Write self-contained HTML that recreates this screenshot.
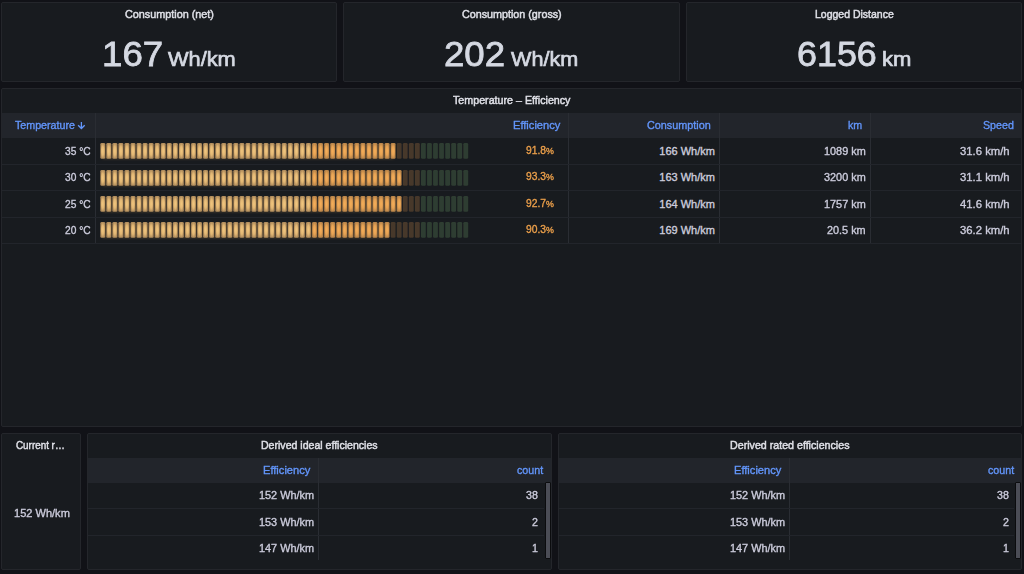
<!DOCTYPE html>
<html><head><meta charset="utf-8"><style>
html,body{margin:0;padding:0;}
body{width:1024px;height:574px;overflow:hidden;background:#111217;position:relative;font-family:"Liberation Sans", sans-serif;}
.p{position:absolute;background:#181b1f;border:1px solid #24262b;border-radius:2px;}
.r{position:absolute;}

.t{position:absolute;white-space:nowrap;line-height:1;transform-origin:0 0;}
.ttl{-webkit-text-stroke:0.45px;}
.big{-webkit-text-stroke:0.8px;}
.unit{-webkit-text-stroke:0.7px;}
.bd{-webkit-text-stroke:0.35px;}

.bar{position:absolute;}
.bar i{position:absolute;top:0;width:4.8px;height:15.8px;border-radius:1.5px;}
.cl1{background:radial-gradient(ellipse at center,#f2c77f 0%,#e9bd77 45%,#c9a066 100%);box-shadow:0 0 1.5px rgba(255,203,125,0.4);}
.cl2{background:radial-gradient(ellipse at center,#f4ad58 0%,#eaa654 45%,#c98d4e 100%);box-shadow:0 0 1.5px rgba(255,179,87,0.4);}
.cu1{background:#46372a;}
.cu2{background:#2e3d31;}
</style></head><body>
<div class="p" style="left:1px;top:2px;width:334px;height:78px;"></div>
<div class="p" style="left:343px;top:2px;width:335px;height:78px;"></div>
<div class="p" style="left:686px;top:2px;width:334px;height:78px;"></div>
<div class="p" style="left:1px;top:88px;width:1019px;height:337px;"></div>
<div class="r" style="left:2px;top:113px;width:1019px;height:25px;background:#22252b"></div>
<div class="r" style="left:95px;top:113px;width:1px;height:130px;background:#2a2d33"></div>
<div class="r" style="left:568px;top:113px;width:1px;height:130px;background:#2a2d33"></div>
<div class="r" style="left:719px;top:113px;width:1px;height:130px;background:#2a2d33"></div>
<div class="r" style="left:870px;top:113px;width:1px;height:130px;background:#2a2d33"></div>
<div class="r" style="left:2px;top:164px;width:1019px;height:1px;background:#22252b"></div>
<div class="r" style="left:2px;top:190px;width:1019px;height:1px;background:#22252b"></div>
<div class="r" style="left:2px;top:217px;width:1019px;height:1px;background:#22252b"></div>
<div class="r" style="left:2px;top:243px;width:1019px;height:1px;background:#22252b"></div>
<div class="p" style="left:1px;top:433px;width:78px;height:135px;"></div>
<div class="p" style="left:87px;top:433px;width:463px;height:135px;"></div>
<div class="r" style="left:88px;top:458px;width:463px;height:25px;background:#22252b"></div>
<div class="r" style="left:318px;top:458px;width:1px;height:102px;background:#2a2d33"></div>
<div class="r" style="left:88px;top:508px;width:456px;height:1px;background:#22252b"></div>
<div class="r" style="left:88px;top:535px;width:456px;height:1px;background:#22252b"></div>
<div class="r" style="left:545px;top:482px;width:6px;height:77px;background:#4b4d56;border:1px solid #0b0c0e;box-sizing:border-box;border-radius:1px"></div>
<div class="p" style="left:558px;top:433px;width:462px;height:135px;"></div>
<div class="r" style="left:559px;top:458px;width:462px;height:25px;background:#22252b"></div>
<div class="r" style="left:789px;top:458px;width:1px;height:102px;background:#2a2d33"></div>
<div class="r" style="left:559px;top:508px;width:455px;height:1px;background:#22252b"></div>
<div class="r" style="left:559px;top:535px;width:455px;height:1px;background:#22252b"></div>
<div class="r" style="left:1015px;top:482px;width:6px;height:77px;background:#4b4d56;border:1px solid #0b0c0e;box-sizing:border-box;border-radius:1px"></div>
<svg width="0" height="0" style="position:absolute"><defs>
<radialGradient id="g1" cx="50%" cy="50%" r="50%"><stop offset="0" stop-color="#f2c77f"/><stop offset="0.55" stop-color="#e2b774"/><stop offset="1" stop-color="#b08c5c"/></radialGradient>
<radialGradient id="g2" cx="50%" cy="50%" r="50%"><stop offset="0" stop-color="#f6af5a"/><stop offset="0.55" stop-color="#e6a253"/><stop offset="1" stop-color="#b8844a"/></radialGradient>
<filter id="bl" x="-5%" y="-20%" width="110%" height="140%"><feGaussianBlur stdDeviation="0.5"/></filter><filter id="gl" x="-5%" y="-30%" width="110%" height="160%"><feGaussianBlur stdDeviation="1"/></filter>
</defs></svg>
<svg class="bar" width="372" height="20" style="left:98px;top:141.40px"><rect x="4.5" y="3.5" width="291.45" height="14.8" fill="#f5b260" opacity="0.18" filter="url(#gl)"/><g filter="url(#bl)"><rect x="2.35" y="2" width="4.8" height="15.8" rx="1.3" fill="url(#g1)"/><rect x="8.40" y="2" width="4.8" height="15.8" rx="1.3" fill="url(#g1)"/><rect x="14.45" y="2" width="4.8" height="15.8" rx="1.3" fill="url(#g1)"/><rect x="20.50" y="2" width="4.8" height="15.8" rx="1.3" fill="url(#g1)"/><rect x="26.55" y="2" width="4.8" height="15.8" rx="1.3" fill="url(#g1)"/><rect x="32.60" y="2" width="4.8" height="15.8" rx="1.3" fill="url(#g1)"/><rect x="38.65" y="2" width="4.8" height="15.8" rx="1.3" fill="url(#g1)"/><rect x="44.70" y="2" width="4.8" height="15.8" rx="1.3" fill="url(#g1)"/><rect x="50.75" y="2" width="4.8" height="15.8" rx="1.3" fill="url(#g1)"/><rect x="56.80" y="2" width="4.8" height="15.8" rx="1.3" fill="url(#g1)"/><rect x="62.85" y="2" width="4.8" height="15.8" rx="1.3" fill="url(#g1)"/><rect x="68.90" y="2" width="4.8" height="15.8" rx="1.3" fill="url(#g1)"/><rect x="74.95" y="2" width="4.8" height="15.8" rx="1.3" fill="url(#g1)"/><rect x="81.00" y="2" width="4.8" height="15.8" rx="1.3" fill="url(#g1)"/><rect x="87.05" y="2" width="4.8" height="15.8" rx="1.3" fill="url(#g1)"/><rect x="93.10" y="2" width="4.8" height="15.8" rx="1.3" fill="url(#g1)"/><rect x="99.15" y="2" width="4.8" height="15.8" rx="1.3" fill="url(#g1)"/><rect x="105.20" y="2" width="4.8" height="15.8" rx="1.3" fill="url(#g1)"/><rect x="111.25" y="2" width="4.8" height="15.8" rx="1.3" fill="url(#g1)"/><rect x="117.30" y="2" width="4.8" height="15.8" rx="1.3" fill="url(#g1)"/><rect x="123.35" y="2" width="4.8" height="15.8" rx="1.3" fill="url(#g1)"/><rect x="129.40" y="2" width="4.8" height="15.8" rx="1.3" fill="url(#g1)"/><rect x="135.45" y="2" width="4.8" height="15.8" rx="1.3" fill="url(#g1)"/><rect x="141.50" y="2" width="4.8" height="15.8" rx="1.3" fill="url(#g1)"/><rect x="147.55" y="2" width="4.8" height="15.8" rx="1.3" fill="url(#g1)"/><rect x="153.60" y="2" width="4.8" height="15.8" rx="1.3" fill="url(#g1)"/><rect x="159.65" y="2" width="4.8" height="15.8" rx="1.3" fill="url(#g1)"/><rect x="165.70" y="2" width="4.8" height="15.8" rx="1.3" fill="url(#g1)"/><rect x="171.75" y="2" width="4.8" height="15.8" rx="1.3" fill="url(#g1)"/><rect x="177.80" y="2" width="4.8" height="15.8" rx="1.3" fill="url(#g1)"/><rect x="183.85" y="2" width="4.8" height="15.8" rx="1.3" fill="url(#g1)"/><rect x="189.90" y="2" width="4.8" height="15.8" rx="1.3" fill="url(#g1)"/><rect x="195.95" y="2" width="4.8" height="15.8" rx="1.3" fill="url(#g1)"/><rect x="202.00" y="2" width="4.8" height="15.8" rx="1.3" fill="url(#g1)"/><rect x="208.05" y="2" width="4.8" height="15.8" rx="1.3" fill="url(#g1)"/><rect x="214.10" y="2" width="4.8" height="15.8" rx="1.3" fill="url(#g2)"/><rect x="220.15" y="2" width="4.8" height="15.8" rx="1.3" fill="url(#g2)"/><rect x="226.20" y="2" width="4.8" height="15.8" rx="1.3" fill="url(#g2)"/><rect x="232.25" y="2" width="4.8" height="15.8" rx="1.3" fill="url(#g2)"/><rect x="238.30" y="2" width="4.8" height="15.8" rx="1.3" fill="url(#g2)"/><rect x="244.35" y="2" width="4.8" height="15.8" rx="1.3" fill="url(#g2)"/><rect x="250.40" y="2" width="4.8" height="15.8" rx="1.3" fill="url(#g2)"/><rect x="256.45" y="2" width="4.8" height="15.8" rx="1.3" fill="url(#g2)"/><rect x="262.50" y="2" width="4.8" height="15.8" rx="1.3" fill="url(#g2)"/><rect x="268.55" y="2" width="4.8" height="15.8" rx="1.3" fill="url(#g2)"/><rect x="274.60" y="2" width="4.8" height="15.8" rx="1.3" fill="url(#g2)"/><rect x="280.65" y="2" width="4.8" height="15.8" rx="1.3" fill="url(#g2)"/><rect x="286.70" y="2" width="4.8" height="15.8" rx="1.3" fill="url(#g2)"/><rect x="292.75" y="2" width="4.8" height="15.8" rx="1.3" fill="url(#g2)"/><rect x="298.80" y="2" width="4.8" height="15.8" rx="1.3" fill="#46372a"/><rect x="304.85" y="2" width="4.8" height="15.8" rx="1.3" fill="#46372a"/><rect x="310.90" y="2" width="4.8" height="15.8" rx="1.3" fill="#46372a"/><rect x="316.95" y="2" width="4.8" height="15.8" rx="1.3" fill="#46372a"/><rect x="323.00" y="2" width="4.8" height="15.8" rx="1.3" fill="#2e3d31"/><rect x="329.05" y="2" width="4.8" height="15.8" rx="1.3" fill="#2e3d31"/><rect x="335.10" y="2" width="4.8" height="15.8" rx="1.3" fill="#2e3d31"/><rect x="341.15" y="2" width="4.8" height="15.8" rx="1.3" fill="#2e3d31"/><rect x="347.20" y="2" width="4.8" height="15.8" rx="1.3" fill="#2e3d31"/><rect x="353.25" y="2" width="4.8" height="15.8" rx="1.3" fill="#2e3d31"/><rect x="359.30" y="2" width="4.8" height="15.8" rx="1.3" fill="#2e3d31"/><rect x="365.35" y="2" width="4.8" height="15.8" rx="1.3" fill="#2e3d31"/></g></svg>
<svg class="bar" width="372" height="20" style="left:98px;top:167.60px"><rect x="4.5" y="3.5" width="297.50" height="14.8" fill="#f5b260" opacity="0.18" filter="url(#gl)"/><g filter="url(#bl)"><rect x="2.35" y="2" width="4.8" height="15.8" rx="1.3" fill="url(#g1)"/><rect x="8.40" y="2" width="4.8" height="15.8" rx="1.3" fill="url(#g1)"/><rect x="14.45" y="2" width="4.8" height="15.8" rx="1.3" fill="url(#g1)"/><rect x="20.50" y="2" width="4.8" height="15.8" rx="1.3" fill="url(#g1)"/><rect x="26.55" y="2" width="4.8" height="15.8" rx="1.3" fill="url(#g1)"/><rect x="32.60" y="2" width="4.8" height="15.8" rx="1.3" fill="url(#g1)"/><rect x="38.65" y="2" width="4.8" height="15.8" rx="1.3" fill="url(#g1)"/><rect x="44.70" y="2" width="4.8" height="15.8" rx="1.3" fill="url(#g1)"/><rect x="50.75" y="2" width="4.8" height="15.8" rx="1.3" fill="url(#g1)"/><rect x="56.80" y="2" width="4.8" height="15.8" rx="1.3" fill="url(#g1)"/><rect x="62.85" y="2" width="4.8" height="15.8" rx="1.3" fill="url(#g1)"/><rect x="68.90" y="2" width="4.8" height="15.8" rx="1.3" fill="url(#g1)"/><rect x="74.95" y="2" width="4.8" height="15.8" rx="1.3" fill="url(#g1)"/><rect x="81.00" y="2" width="4.8" height="15.8" rx="1.3" fill="url(#g1)"/><rect x="87.05" y="2" width="4.8" height="15.8" rx="1.3" fill="url(#g1)"/><rect x="93.10" y="2" width="4.8" height="15.8" rx="1.3" fill="url(#g1)"/><rect x="99.15" y="2" width="4.8" height="15.8" rx="1.3" fill="url(#g1)"/><rect x="105.20" y="2" width="4.8" height="15.8" rx="1.3" fill="url(#g1)"/><rect x="111.25" y="2" width="4.8" height="15.8" rx="1.3" fill="url(#g1)"/><rect x="117.30" y="2" width="4.8" height="15.8" rx="1.3" fill="url(#g1)"/><rect x="123.35" y="2" width="4.8" height="15.8" rx="1.3" fill="url(#g1)"/><rect x="129.40" y="2" width="4.8" height="15.8" rx="1.3" fill="url(#g1)"/><rect x="135.45" y="2" width="4.8" height="15.8" rx="1.3" fill="url(#g1)"/><rect x="141.50" y="2" width="4.8" height="15.8" rx="1.3" fill="url(#g1)"/><rect x="147.55" y="2" width="4.8" height="15.8" rx="1.3" fill="url(#g1)"/><rect x="153.60" y="2" width="4.8" height="15.8" rx="1.3" fill="url(#g1)"/><rect x="159.65" y="2" width="4.8" height="15.8" rx="1.3" fill="url(#g1)"/><rect x="165.70" y="2" width="4.8" height="15.8" rx="1.3" fill="url(#g1)"/><rect x="171.75" y="2" width="4.8" height="15.8" rx="1.3" fill="url(#g1)"/><rect x="177.80" y="2" width="4.8" height="15.8" rx="1.3" fill="url(#g1)"/><rect x="183.85" y="2" width="4.8" height="15.8" rx="1.3" fill="url(#g1)"/><rect x="189.90" y="2" width="4.8" height="15.8" rx="1.3" fill="url(#g1)"/><rect x="195.95" y="2" width="4.8" height="15.8" rx="1.3" fill="url(#g1)"/><rect x="202.00" y="2" width="4.8" height="15.8" rx="1.3" fill="url(#g1)"/><rect x="208.05" y="2" width="4.8" height="15.8" rx="1.3" fill="url(#g1)"/><rect x="214.10" y="2" width="4.8" height="15.8" rx="1.3" fill="url(#g2)"/><rect x="220.15" y="2" width="4.8" height="15.8" rx="1.3" fill="url(#g2)"/><rect x="226.20" y="2" width="4.8" height="15.8" rx="1.3" fill="url(#g2)"/><rect x="232.25" y="2" width="4.8" height="15.8" rx="1.3" fill="url(#g2)"/><rect x="238.30" y="2" width="4.8" height="15.8" rx="1.3" fill="url(#g2)"/><rect x="244.35" y="2" width="4.8" height="15.8" rx="1.3" fill="url(#g2)"/><rect x="250.40" y="2" width="4.8" height="15.8" rx="1.3" fill="url(#g2)"/><rect x="256.45" y="2" width="4.8" height="15.8" rx="1.3" fill="url(#g2)"/><rect x="262.50" y="2" width="4.8" height="15.8" rx="1.3" fill="url(#g2)"/><rect x="268.55" y="2" width="4.8" height="15.8" rx="1.3" fill="url(#g2)"/><rect x="274.60" y="2" width="4.8" height="15.8" rx="1.3" fill="url(#g2)"/><rect x="280.65" y="2" width="4.8" height="15.8" rx="1.3" fill="url(#g2)"/><rect x="286.70" y="2" width="4.8" height="15.8" rx="1.3" fill="url(#g2)"/><rect x="292.75" y="2" width="4.8" height="15.8" rx="1.3" fill="url(#g2)"/><rect x="298.80" y="2" width="4.8" height="15.8" rx="1.3" fill="url(#g2)"/><rect x="304.85" y="2" width="4.8" height="15.8" rx="1.3" fill="#46372a"/><rect x="310.90" y="2" width="4.8" height="15.8" rx="1.3" fill="#46372a"/><rect x="316.95" y="2" width="4.8" height="15.8" rx="1.3" fill="#46372a"/><rect x="323.00" y="2" width="4.8" height="15.8" rx="1.3" fill="#2e3d31"/><rect x="329.05" y="2" width="4.8" height="15.8" rx="1.3" fill="#2e3d31"/><rect x="335.10" y="2" width="4.8" height="15.8" rx="1.3" fill="#2e3d31"/><rect x="341.15" y="2" width="4.8" height="15.8" rx="1.3" fill="#2e3d31"/><rect x="347.20" y="2" width="4.8" height="15.8" rx="1.3" fill="#2e3d31"/><rect x="353.25" y="2" width="4.8" height="15.8" rx="1.3" fill="#2e3d31"/><rect x="359.30" y="2" width="4.8" height="15.8" rx="1.3" fill="#2e3d31"/><rect x="365.35" y="2" width="4.8" height="15.8" rx="1.3" fill="#2e3d31"/></g></svg>
<svg class="bar" width="372" height="20" style="left:98px;top:193.80px"><rect x="4.5" y="3.5" width="297.50" height="14.8" fill="#f5b260" opacity="0.18" filter="url(#gl)"/><g filter="url(#bl)"><rect x="2.35" y="2" width="4.8" height="15.8" rx="1.3" fill="url(#g1)"/><rect x="8.40" y="2" width="4.8" height="15.8" rx="1.3" fill="url(#g1)"/><rect x="14.45" y="2" width="4.8" height="15.8" rx="1.3" fill="url(#g1)"/><rect x="20.50" y="2" width="4.8" height="15.8" rx="1.3" fill="url(#g1)"/><rect x="26.55" y="2" width="4.8" height="15.8" rx="1.3" fill="url(#g1)"/><rect x="32.60" y="2" width="4.8" height="15.8" rx="1.3" fill="url(#g1)"/><rect x="38.65" y="2" width="4.8" height="15.8" rx="1.3" fill="url(#g1)"/><rect x="44.70" y="2" width="4.8" height="15.8" rx="1.3" fill="url(#g1)"/><rect x="50.75" y="2" width="4.8" height="15.8" rx="1.3" fill="url(#g1)"/><rect x="56.80" y="2" width="4.8" height="15.8" rx="1.3" fill="url(#g1)"/><rect x="62.85" y="2" width="4.8" height="15.8" rx="1.3" fill="url(#g1)"/><rect x="68.90" y="2" width="4.8" height="15.8" rx="1.3" fill="url(#g1)"/><rect x="74.95" y="2" width="4.8" height="15.8" rx="1.3" fill="url(#g1)"/><rect x="81.00" y="2" width="4.8" height="15.8" rx="1.3" fill="url(#g1)"/><rect x="87.05" y="2" width="4.8" height="15.8" rx="1.3" fill="url(#g1)"/><rect x="93.10" y="2" width="4.8" height="15.8" rx="1.3" fill="url(#g1)"/><rect x="99.15" y="2" width="4.8" height="15.8" rx="1.3" fill="url(#g1)"/><rect x="105.20" y="2" width="4.8" height="15.8" rx="1.3" fill="url(#g1)"/><rect x="111.25" y="2" width="4.8" height="15.8" rx="1.3" fill="url(#g1)"/><rect x="117.30" y="2" width="4.8" height="15.8" rx="1.3" fill="url(#g1)"/><rect x="123.35" y="2" width="4.8" height="15.8" rx="1.3" fill="url(#g1)"/><rect x="129.40" y="2" width="4.8" height="15.8" rx="1.3" fill="url(#g1)"/><rect x="135.45" y="2" width="4.8" height="15.8" rx="1.3" fill="url(#g1)"/><rect x="141.50" y="2" width="4.8" height="15.8" rx="1.3" fill="url(#g1)"/><rect x="147.55" y="2" width="4.8" height="15.8" rx="1.3" fill="url(#g1)"/><rect x="153.60" y="2" width="4.8" height="15.8" rx="1.3" fill="url(#g1)"/><rect x="159.65" y="2" width="4.8" height="15.8" rx="1.3" fill="url(#g1)"/><rect x="165.70" y="2" width="4.8" height="15.8" rx="1.3" fill="url(#g1)"/><rect x="171.75" y="2" width="4.8" height="15.8" rx="1.3" fill="url(#g1)"/><rect x="177.80" y="2" width="4.8" height="15.8" rx="1.3" fill="url(#g1)"/><rect x="183.85" y="2" width="4.8" height="15.8" rx="1.3" fill="url(#g1)"/><rect x="189.90" y="2" width="4.8" height="15.8" rx="1.3" fill="url(#g1)"/><rect x="195.95" y="2" width="4.8" height="15.8" rx="1.3" fill="url(#g1)"/><rect x="202.00" y="2" width="4.8" height="15.8" rx="1.3" fill="url(#g1)"/><rect x="208.05" y="2" width="4.8" height="15.8" rx="1.3" fill="url(#g1)"/><rect x="214.10" y="2" width="4.8" height="15.8" rx="1.3" fill="url(#g2)"/><rect x="220.15" y="2" width="4.8" height="15.8" rx="1.3" fill="url(#g2)"/><rect x="226.20" y="2" width="4.8" height="15.8" rx="1.3" fill="url(#g2)"/><rect x="232.25" y="2" width="4.8" height="15.8" rx="1.3" fill="url(#g2)"/><rect x="238.30" y="2" width="4.8" height="15.8" rx="1.3" fill="url(#g2)"/><rect x="244.35" y="2" width="4.8" height="15.8" rx="1.3" fill="url(#g2)"/><rect x="250.40" y="2" width="4.8" height="15.8" rx="1.3" fill="url(#g2)"/><rect x="256.45" y="2" width="4.8" height="15.8" rx="1.3" fill="url(#g2)"/><rect x="262.50" y="2" width="4.8" height="15.8" rx="1.3" fill="url(#g2)"/><rect x="268.55" y="2" width="4.8" height="15.8" rx="1.3" fill="url(#g2)"/><rect x="274.60" y="2" width="4.8" height="15.8" rx="1.3" fill="url(#g2)"/><rect x="280.65" y="2" width="4.8" height="15.8" rx="1.3" fill="url(#g2)"/><rect x="286.70" y="2" width="4.8" height="15.8" rx="1.3" fill="url(#g2)"/><rect x="292.75" y="2" width="4.8" height="15.8" rx="1.3" fill="url(#g2)"/><rect x="298.80" y="2" width="4.8" height="15.8" rx="1.3" fill="url(#g2)"/><rect x="304.85" y="2" width="4.8" height="15.8" rx="1.3" fill="#46372a"/><rect x="310.90" y="2" width="4.8" height="15.8" rx="1.3" fill="#46372a"/><rect x="316.95" y="2" width="4.8" height="15.8" rx="1.3" fill="#46372a"/><rect x="323.00" y="2" width="4.8" height="15.8" rx="1.3" fill="#2e3d31"/><rect x="329.05" y="2" width="4.8" height="15.8" rx="1.3" fill="#2e3d31"/><rect x="335.10" y="2" width="4.8" height="15.8" rx="1.3" fill="#2e3d31"/><rect x="341.15" y="2" width="4.8" height="15.8" rx="1.3" fill="#2e3d31"/><rect x="347.20" y="2" width="4.8" height="15.8" rx="1.3" fill="#2e3d31"/><rect x="353.25" y="2" width="4.8" height="15.8" rx="1.3" fill="#2e3d31"/><rect x="359.30" y="2" width="4.8" height="15.8" rx="1.3" fill="#2e3d31"/><rect x="365.35" y="2" width="4.8" height="15.8" rx="1.3" fill="#2e3d31"/></g></svg>
<svg class="bar" width="372" height="20" style="left:98px;top:220.00px"><rect x="4.5" y="3.5" width="285.40" height="14.8" fill="#f5b260" opacity="0.18" filter="url(#gl)"/><g filter="url(#bl)"><rect x="2.35" y="2" width="4.8" height="15.8" rx="1.3" fill="url(#g1)"/><rect x="8.40" y="2" width="4.8" height="15.8" rx="1.3" fill="url(#g1)"/><rect x="14.45" y="2" width="4.8" height="15.8" rx="1.3" fill="url(#g1)"/><rect x="20.50" y="2" width="4.8" height="15.8" rx="1.3" fill="url(#g1)"/><rect x="26.55" y="2" width="4.8" height="15.8" rx="1.3" fill="url(#g1)"/><rect x="32.60" y="2" width="4.8" height="15.8" rx="1.3" fill="url(#g1)"/><rect x="38.65" y="2" width="4.8" height="15.8" rx="1.3" fill="url(#g1)"/><rect x="44.70" y="2" width="4.8" height="15.8" rx="1.3" fill="url(#g1)"/><rect x="50.75" y="2" width="4.8" height="15.8" rx="1.3" fill="url(#g1)"/><rect x="56.80" y="2" width="4.8" height="15.8" rx="1.3" fill="url(#g1)"/><rect x="62.85" y="2" width="4.8" height="15.8" rx="1.3" fill="url(#g1)"/><rect x="68.90" y="2" width="4.8" height="15.8" rx="1.3" fill="url(#g1)"/><rect x="74.95" y="2" width="4.8" height="15.8" rx="1.3" fill="url(#g1)"/><rect x="81.00" y="2" width="4.8" height="15.8" rx="1.3" fill="url(#g1)"/><rect x="87.05" y="2" width="4.8" height="15.8" rx="1.3" fill="url(#g1)"/><rect x="93.10" y="2" width="4.8" height="15.8" rx="1.3" fill="url(#g1)"/><rect x="99.15" y="2" width="4.8" height="15.8" rx="1.3" fill="url(#g1)"/><rect x="105.20" y="2" width="4.8" height="15.8" rx="1.3" fill="url(#g1)"/><rect x="111.25" y="2" width="4.8" height="15.8" rx="1.3" fill="url(#g1)"/><rect x="117.30" y="2" width="4.8" height="15.8" rx="1.3" fill="url(#g1)"/><rect x="123.35" y="2" width="4.8" height="15.8" rx="1.3" fill="url(#g1)"/><rect x="129.40" y="2" width="4.8" height="15.8" rx="1.3" fill="url(#g1)"/><rect x="135.45" y="2" width="4.8" height="15.8" rx="1.3" fill="url(#g1)"/><rect x="141.50" y="2" width="4.8" height="15.8" rx="1.3" fill="url(#g1)"/><rect x="147.55" y="2" width="4.8" height="15.8" rx="1.3" fill="url(#g1)"/><rect x="153.60" y="2" width="4.8" height="15.8" rx="1.3" fill="url(#g1)"/><rect x="159.65" y="2" width="4.8" height="15.8" rx="1.3" fill="url(#g1)"/><rect x="165.70" y="2" width="4.8" height="15.8" rx="1.3" fill="url(#g1)"/><rect x="171.75" y="2" width="4.8" height="15.8" rx="1.3" fill="url(#g1)"/><rect x="177.80" y="2" width="4.8" height="15.8" rx="1.3" fill="url(#g1)"/><rect x="183.85" y="2" width="4.8" height="15.8" rx="1.3" fill="url(#g1)"/><rect x="189.90" y="2" width="4.8" height="15.8" rx="1.3" fill="url(#g1)"/><rect x="195.95" y="2" width="4.8" height="15.8" rx="1.3" fill="url(#g1)"/><rect x="202.00" y="2" width="4.8" height="15.8" rx="1.3" fill="url(#g1)"/><rect x="208.05" y="2" width="4.8" height="15.8" rx="1.3" fill="url(#g1)"/><rect x="214.10" y="2" width="4.8" height="15.8" rx="1.3" fill="url(#g2)"/><rect x="220.15" y="2" width="4.8" height="15.8" rx="1.3" fill="url(#g2)"/><rect x="226.20" y="2" width="4.8" height="15.8" rx="1.3" fill="url(#g2)"/><rect x="232.25" y="2" width="4.8" height="15.8" rx="1.3" fill="url(#g2)"/><rect x="238.30" y="2" width="4.8" height="15.8" rx="1.3" fill="url(#g2)"/><rect x="244.35" y="2" width="4.8" height="15.8" rx="1.3" fill="url(#g2)"/><rect x="250.40" y="2" width="4.8" height="15.8" rx="1.3" fill="url(#g2)"/><rect x="256.45" y="2" width="4.8" height="15.8" rx="1.3" fill="url(#g2)"/><rect x="262.50" y="2" width="4.8" height="15.8" rx="1.3" fill="url(#g2)"/><rect x="268.55" y="2" width="4.8" height="15.8" rx="1.3" fill="url(#g2)"/><rect x="274.60" y="2" width="4.8" height="15.8" rx="1.3" fill="url(#g2)"/><rect x="280.65" y="2" width="4.8" height="15.8" rx="1.3" fill="url(#g2)"/><rect x="286.70" y="2" width="4.8" height="15.8" rx="1.3" fill="url(#g2)"/><rect x="292.75" y="2" width="4.8" height="15.8" rx="1.3" fill="#46372a"/><rect x="298.80" y="2" width="4.8" height="15.8" rx="1.3" fill="#46372a"/><rect x="304.85" y="2" width="4.8" height="15.8" rx="1.3" fill="#46372a"/><rect x="310.90" y="2" width="4.8" height="15.8" rx="1.3" fill="#46372a"/><rect x="316.95" y="2" width="4.8" height="15.8" rx="1.3" fill="#46372a"/><rect x="323.00" y="2" width="4.8" height="15.8" rx="1.3" fill="#2e3d31"/><rect x="329.05" y="2" width="4.8" height="15.8" rx="1.3" fill="#2e3d31"/><rect x="335.10" y="2" width="4.8" height="15.8" rx="1.3" fill="#2e3d31"/><rect x="341.15" y="2" width="4.8" height="15.8" rx="1.3" fill="#2e3d31"/><rect x="347.20" y="2" width="4.8" height="15.8" rx="1.3" fill="#2e3d31"/><rect x="353.25" y="2" width="4.8" height="15.8" rx="1.3" fill="#2e3d31"/><rect x="359.30" y="2" width="4.8" height="15.8" rx="1.3" fill="#2e3d31"/><rect x="365.35" y="2" width="4.8" height="15.8" rx="1.3" fill="#2e3d31"/></g></svg>
<div class="t ttl" style="left:125.20px;top:9px;font-size:11px;color:#e0e1e8;-webkit-text-stroke-color:#e0e1e8;transform:scaleX(0.9833);">Consumption (net)</div>
<div class="t ttl" style="left:462.00px;top:9px;font-size:11px;color:#e0e1e8;-webkit-text-stroke-color:#e0e1e8;transform:scaleX(0.9765);">Consumption (gross)</div>
<div class="t ttl" style="left:814.60px;top:9px;font-size:11px;color:#e0e1e8;-webkit-text-stroke-color:#e0e1e8;transform:scaleX(0.9542);">Logged Distance</div>
<div class="t big" style="left:101.74px;top:37px;font-size:35.5px;color:#d5d9e2;-webkit-text-stroke-color:#d5d9e2;transform:scaleX(1.0321);">167</div>
<div class="t big" style="left:444.27px;top:37px;font-size:35.5px;color:#d5d9e2;-webkit-text-stroke-color:#d5d9e2;transform:scaleX(1.0298);">202</div>
<div class="t big" style="left:796.89px;top:37px;font-size:35.5px;color:#d5d9e2;-webkit-text-stroke-color:#d5d9e2;transform:scaleX(1.0104);">6156</div>
<div class="t unit" style="left:168.20px;top:48px;font-size:21px;color:#d5d9e2;-webkit-text-stroke-color:#d5d9e2;transform:scaleX(1.0369);">Wh/km</div>
<div class="t unit" style="left:511.00px;top:48px;font-size:21px;color:#d5d9e2;-webkit-text-stroke-color:#d5d9e2;transform:scaleX(1.0292);">Wh/km</div>
<div class="t unit" style="left:882.25px;top:48px;font-size:21px;color:#d5d9e2;-webkit-text-stroke-color:#d5d9e2;transform:scaleX(1.0500);">km</div>
<div class="t ttl" style="left:452.80px;top:95px;font-size:11px;color:#e0e1e8;-webkit-text-stroke-color:#e0e1e8;transform:scaleX(0.9719);">Temperature – Efficiency</div>
<div class="t bd" style="left:14.80px;top:120px;font-size:11px;color:#6396fc;-webkit-text-stroke-color:#6396fc;transform:scaleX(0.9710);">Temperature</div>
<div class="t" style="left:77px;top:121px"><svg width="9" height="9" viewBox="0 0 9 9" style="display:block"><path d="M4.4 1V7.6M1.1 4.2L4.4 7.5L7.7 4.2" stroke="#6396fc" stroke-width="1.3" fill="none"/></svg></div>
<div class="t bd" style="left:512.99px;top:120px;font-size:11px;color:#6396fc;-webkit-text-stroke-color:#6396fc;transform:scaleX(1.0087);">Efficiency</div>
<div class="t bd" style="left:647.20px;top:120px;font-size:11px;color:#6396fc;-webkit-text-stroke-color:#6396fc;transform:scaleX(0.9831);">Consumption</div>
<div class="t bd" style="left:848.42px;top:120px;font-size:11px;color:#6396fc;-webkit-text-stroke-color:#6396fc;transform:scaleX(0.9700);">km</div>
<div class="t bd" style="left:982.66px;top:120px;font-size:11px;color:#6396fc;-webkit-text-stroke-color:#6396fc;transform:scaleX(0.9700);">Speed</div>
<div class="t bd" style="left:64.60px;top:146px;font-size:11px;color:#ccccdc;-webkit-text-stroke-color:#ccccdc;transform:scaleX(0.9250);">35 °C</div>
<div class="t bd" style="left:525.90px;top:145px;font-size:11px;color:#eb9f4a;-webkit-text-stroke-color:#eb9f4a;transform:scaleX(0.9367);">91.8<span style="font-size:9.5px">%</span></div>
<div class="t bd" style="left:659.30px;top:146px;font-size:11px;color:#ccccdc;-webkit-text-stroke-color:#ccccdc;">166 Wh/km</div>
<div class="t bd" style="left:823.90px;top:146px;font-size:11px;color:#ccccdc;-webkit-text-stroke-color:#ccccdc;transform:scaleX(0.9881);">1089 km</div>
<div class="t bd" style="left:959.70px;top:146px;font-size:11px;color:#ccccdc;-webkit-text-stroke-color:#ccccdc;transform:scaleX(1.0271);">31.6 km/h</div>
<div class="t bd" style="left:64.60px;top:172px;font-size:11px;color:#ccccdc;-webkit-text-stroke-color:#ccccdc;transform:scaleX(0.9250);">30 °C</div>
<div class="t bd" style="left:525.90px;top:171px;font-size:11px;color:#eb9f4a;-webkit-text-stroke-color:#eb9f4a;transform:scaleX(0.9367);">93.3<span style="font-size:9.5px">%</span></div>
<div class="t bd" style="left:659.30px;top:172px;font-size:11px;color:#ccccdc;-webkit-text-stroke-color:#ccccdc;">163 Wh/km</div>
<div class="t bd" style="left:823.90px;top:172px;font-size:11px;color:#ccccdc;-webkit-text-stroke-color:#ccccdc;transform:scaleX(0.9881);">3200 km</div>
<div class="t bd" style="left:959.70px;top:172px;font-size:11px;color:#ccccdc;-webkit-text-stroke-color:#ccccdc;transform:scaleX(1.0271);">31.1 km/h</div>
<div class="t bd" style="left:64.60px;top:199px;font-size:11px;color:#ccccdc;-webkit-text-stroke-color:#ccccdc;transform:scaleX(0.9250);">25 °C</div>
<div class="t bd" style="left:525.90px;top:198px;font-size:11px;color:#eb9f4a;-webkit-text-stroke-color:#eb9f4a;transform:scaleX(0.9367);">92.7<span style="font-size:9.5px">%</span></div>
<div class="t bd" style="left:659.30px;top:199px;font-size:11px;color:#ccccdc;-webkit-text-stroke-color:#ccccdc;">164 Wh/km</div>
<div class="t bd" style="left:823.90px;top:199px;font-size:11px;color:#ccccdc;-webkit-text-stroke-color:#ccccdc;transform:scaleX(0.9881);">1757 km</div>
<div class="t bd" style="left:959.70px;top:199px;font-size:11px;color:#ccccdc;-webkit-text-stroke-color:#ccccdc;transform:scaleX(1.0271);">41.6 km/h</div>
<div class="t bd" style="left:64.60px;top:225px;font-size:11px;color:#ccccdc;-webkit-text-stroke-color:#ccccdc;transform:scaleX(0.9250);">20 °C</div>
<div class="t bd" style="left:525.90px;top:224px;font-size:11px;color:#eb9f4a;-webkit-text-stroke-color:#eb9f4a;transform:scaleX(0.9367);">90.3<span style="font-size:9.5px">%</span></div>
<div class="t bd" style="left:659.30px;top:225px;font-size:11px;color:#ccccdc;-webkit-text-stroke-color:#ccccdc;">169 Wh/km</div>
<div class="t bd" style="left:826.86px;top:225px;font-size:11px;color:#ccccdc;-webkit-text-stroke-color:#ccccdc;transform:scaleX(0.9881);">20.5 km</div>
<div class="t bd" style="left:959.70px;top:225px;font-size:11px;color:#ccccdc;-webkit-text-stroke-color:#ccccdc;transform:scaleX(1.0271);">36.2 km/h</div>
<div class="t ttl" style="left:16.00px;top:440px;font-size:11px;color:#e0e1e8;-webkit-text-stroke-color:#e0e1e8;transform:scaleX(0.8963);">Current r…</div>
<div class="t bd" style="left:13.60px;top:508px;font-size:11px;color:#ccccdc;-webkit-text-stroke-color:#ccccdc;transform:scaleX(1.0036);">152 Wh/km</div>
<div class="t ttl" style="left:260.70px;top:440px;font-size:11px;color:#e0e1e8;-webkit-text-stroke-color:#e0e1e8;transform:scaleX(0.9598);">Derived ideal efficiencies</div>
<div class="t bd" style="left:263.29px;top:465px;font-size:11px;color:#6396fc;-webkit-text-stroke-color:#6396fc;transform:scaleX(1.0087);">Efficiency</div>
<div class="t bd" style="left:516.71px;top:465px;font-size:11px;color:#6396fc;-webkit-text-stroke-color:#6396fc;transform:scaleX(0.9700);">count</div>
<div class="t bd" style="left:258.75px;top:490px;font-size:11px;color:#ccccdc;-webkit-text-stroke-color:#ccccdc;transform:scaleX(0.9900);">152 Wh/km</div>
<div class="t bd" style="left:526.16px;top:490px;font-size:11px;color:#ccccdc;-webkit-text-stroke-color:#ccccdc;transform:scaleX(0.9700);">38</div>
<div class="t bd" style="left:258.75px;top:517px;font-size:11px;color:#ccccdc;-webkit-text-stroke-color:#ccccdc;transform:scaleX(0.9900);">153 Wh/km</div>
<div class="t bd" style="left:531.98px;top:517px;font-size:11px;color:#ccccdc;-webkit-text-stroke-color:#ccccdc;transform:scaleX(0.9700);">2</div>
<div class="t bd" style="left:258.75px;top:543px;font-size:11px;color:#ccccdc;-webkit-text-stroke-color:#ccccdc;transform:scaleX(0.9900);">147 Wh/km</div>
<div class="t bd" style="left:531.98px;top:543px;font-size:11px;color:#ccccdc;-webkit-text-stroke-color:#ccccdc;transform:scaleX(0.9700);">1</div>
<div class="t ttl" style="left:730.40px;top:440px;font-size:11px;color:#e0e1e8;-webkit-text-stroke-color:#e0e1e8;transform:scaleX(0.9691);">Derived rated efficiencies</div>
<div class="t bd" style="left:733.99px;top:465px;font-size:11px;color:#6396fc;-webkit-text-stroke-color:#6396fc;transform:scaleX(1.0087);">Efficiency</div>
<div class="t bd" style="left:988.01px;top:465px;font-size:11px;color:#6396fc;-webkit-text-stroke-color:#6396fc;transform:scaleX(0.9700);">count</div>
<div class="t bd" style="left:730.05px;top:490px;font-size:11px;color:#ccccdc;-webkit-text-stroke-color:#ccccdc;transform:scaleX(0.9900);">152 Wh/km</div>
<div class="t bd" style="left:996.86px;top:490px;font-size:11px;color:#ccccdc;-webkit-text-stroke-color:#ccccdc;transform:scaleX(0.9700);">38</div>
<div class="t bd" style="left:730.05px;top:517px;font-size:11px;color:#ccccdc;-webkit-text-stroke-color:#ccccdc;transform:scaleX(0.9900);">153 Wh/km</div>
<div class="t bd" style="left:1002.68px;top:517px;font-size:11px;color:#ccccdc;-webkit-text-stroke-color:#ccccdc;transform:scaleX(0.9700);">2</div>
<div class="t bd" style="left:730.05px;top:543px;font-size:11px;color:#ccccdc;-webkit-text-stroke-color:#ccccdc;transform:scaleX(0.9900);">147 Wh/km</div>
<div class="t bd" style="left:1002.68px;top:543px;font-size:11px;color:#ccccdc;-webkit-text-stroke-color:#ccccdc;transform:scaleX(0.9700);">1</div>
</body></html>
